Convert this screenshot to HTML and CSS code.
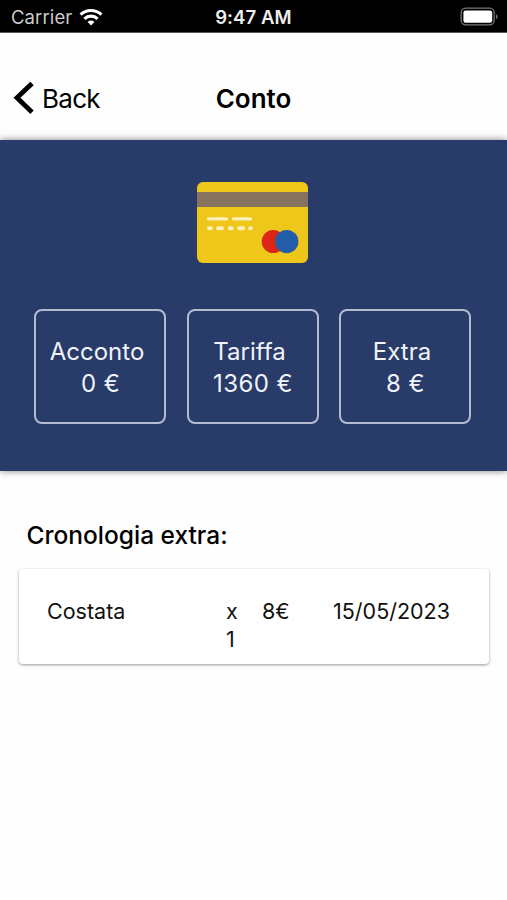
FILE: index.html
```
<!DOCTYPE html>
<html lang="it">

<head>
    <meta charset="UTF-8">
    <meta name="viewport" content="width=device-width, initial-scale=1.0">
    <title>Conto</title>
    <link rel="stylesheet" href="styles.css">
</head>

<body>
    <!-- status bar -->
    <div class="status-bar">
        <div class="carrier">
            <span class="carrier-name">Carrier</span>
            <svg class="wifi" width="24" height="18" viewBox="0 0 24 18">
                <g fill="none" stroke="#fff" stroke-width="3.2">
                    <path d="M1.6 6.7a15 15 0 0 1 20.8 0" />
                    <path d="M5.4 10.8a9.6 9.6 0 0 1 13.2 0" />
                </g>
                <path fill="#fff" d="M12 17.5l-3.4-3.6a4.9 4.9 0 0 1 6.8 0z" />
            </svg>
        </div>
        <div class="time">9:47 AM</div>
        <svg class="battery" width="39" height="20" viewBox="0 0 39 20">
            <rect x="1.2" y="1.2" width="33" height="16.6" rx="4.5" fill="none" stroke="#777" stroke-width="1.3" />
            <rect x="3.4" y="3.4" width="28.8" height="12.4" rx="2.2" fill="#fff" />
            <path d="M36 7.2c2.1.8 2.1 4 0 4.8z" fill="#777" />
        </svg>
    </div>

    <!-- header -->
    <div class="header">
        <a class="back" href="#">
            <svg width="22" height="34" viewBox="0 0 22 34">
                <path d="M20 1.4L5 15.8l15 14.4" fill="none" stroke="#000" stroke-width="4.8" />
            </svg>
            <span>Back</span>
        </a>
        <div class="title">Conto</div>
    </div>

    <div class="summary">
        <svg class="credit-card" width="111" height="81" viewBox="0 0 111 81">
            <rect width="111" height="81" rx="6" fill="#efc71b" />
            <rect y="10" width="111" height="15" fill="#87725f" />
            <g fill="none" stroke="#fbefbb" stroke-width="3.2" stroke-linecap="round">
                <path d="M11.5 36.8h18M36.5 36.8h17" />
                <path d="M12 46.3h2M21 46.3h4M32.7 46.3h2M42.2 46.3h4M53.2 46.3h.5" stroke-width="4" />
            </g>
            <circle cx="76.2" cy="59.6" r="11.5" fill="#dc2515" />
            <circle cx="89.7" cy="59.6" r="11.7" fill="#235da9" />
        </svg>

        <div class="amounts">
            <div class="amount">
                <span class="amount-label">Acconto</span>
                <span class="amount-value">0 €</span>
            </div>
            <div class="amount">
                <span class="amount-label">Tariffa</span>
                <span class="amount-value">1360 €</span>
            </div>
            <div class="amount">
                <span class="amount-label">Extra</span>
                <span class="amount-value">8 €</span>
            </div>
        </div>
    </div>

    <!-- extras list -->
    <div class="history">
        <div class="history-title">Cronologia extra:</div>
        <div class="history-item">
            <span>Costata</span>
            <span class="quantity">x 1</span>
            <span>8€</span>
            <span>15/05/2023</span>
        </div>
    </div>
</body>

</html>
```
FILE: styles.css
```
* {
    box-sizing: border-box;
}

body {
    min-height: 100vh;
    margin: 0;
    background-color: #fefefe;
    color: #000;
    font-family: Inter, 'Liberation Sans', sans-serif;
}

/* status bar */
.status-bar {
    display: grid;
    grid-template-columns: 1fr auto 1fr;
    align-items: center;
    height: 33px;
    padding: 1px 8px 0 11px;
    background-color: #000;
    border-bottom: 1px solid #555;
    color: #eee;
    font-size: 18.5px;
}

.carrier {
    display: flex;
    align-items: center;
    gap: 7px;
}

.carrier-name {
    color: #ccc;
    letter-spacing: 0.1px;
}

.time {
    padding-right: 3px;
    font-weight: 600;
    letter-spacing: 0.1px;
}

.battery {
    justify-self: end;
}

/* header */
.header {
    display: grid;
    grid-template-columns: 1fr auto 1fr;
    align-items: center;
    height: 107px;
    padding: 24px 12px 0;
}

.back {
    display: flex;
    align-items: center;
    gap: 8px;
    color: #000;
    font-size: 26px;
    letter-spacing: -0.7px;
    text-decoration: none;
}

.title {
    font-size: 26px;
    font-weight: 600;
}

/* blue panel */
.summary {
    display: flex;
    flex-direction: column;
    align-items: center;
    height: 331px;
    padding: 42px 36px 0 34px;
    background-color: #283b69;
    box-shadow: 0 0 7px rgba(0, 0, 0, 0.5);
}

.amounts {
    display: grid;
    grid-template-columns: repeat(3, 1fr);
    gap: 20.5px;
    width: 100%;
    margin-top: 46px;
}

.amount {
    display: flex;
    flex-direction: column;
    align-items: center;
    height: 115px;
    padding-top: 25px;
    border: 2px solid #b4bcd2;
    border-radius: 8px;
    color: #f0f3fa;
    font-size: 24px;
    line-height: 32px;
}

.amount-label {
    padding-right: 6px;
}

.amount-value {
    padding-left: 1px;
    letter-spacing: 0.4px;
}

/* extras list */
.history {
    padding: 48px 18px 20px 19px;
}

.history-title {
    padding-left: 7.5px;
    font-size: 24.5px;
    font-weight: 500;
    line-height: 32px;
}

.history-item {
    display: grid;
    grid-template-columns: 179px 36px 71px 1fr;
    height: 95px;
    margin-top: 18px;
    padding: 28px 28px 0;
    border-radius: 4px;
    background-color: #fff;
    box-shadow: 0 1px 3px rgba(0, 0, 0, 0.4);
    color: #111;
    font-size: 21.5px;
    line-height: 28px;
}

.quantity {
    width: 20px;
}
```
